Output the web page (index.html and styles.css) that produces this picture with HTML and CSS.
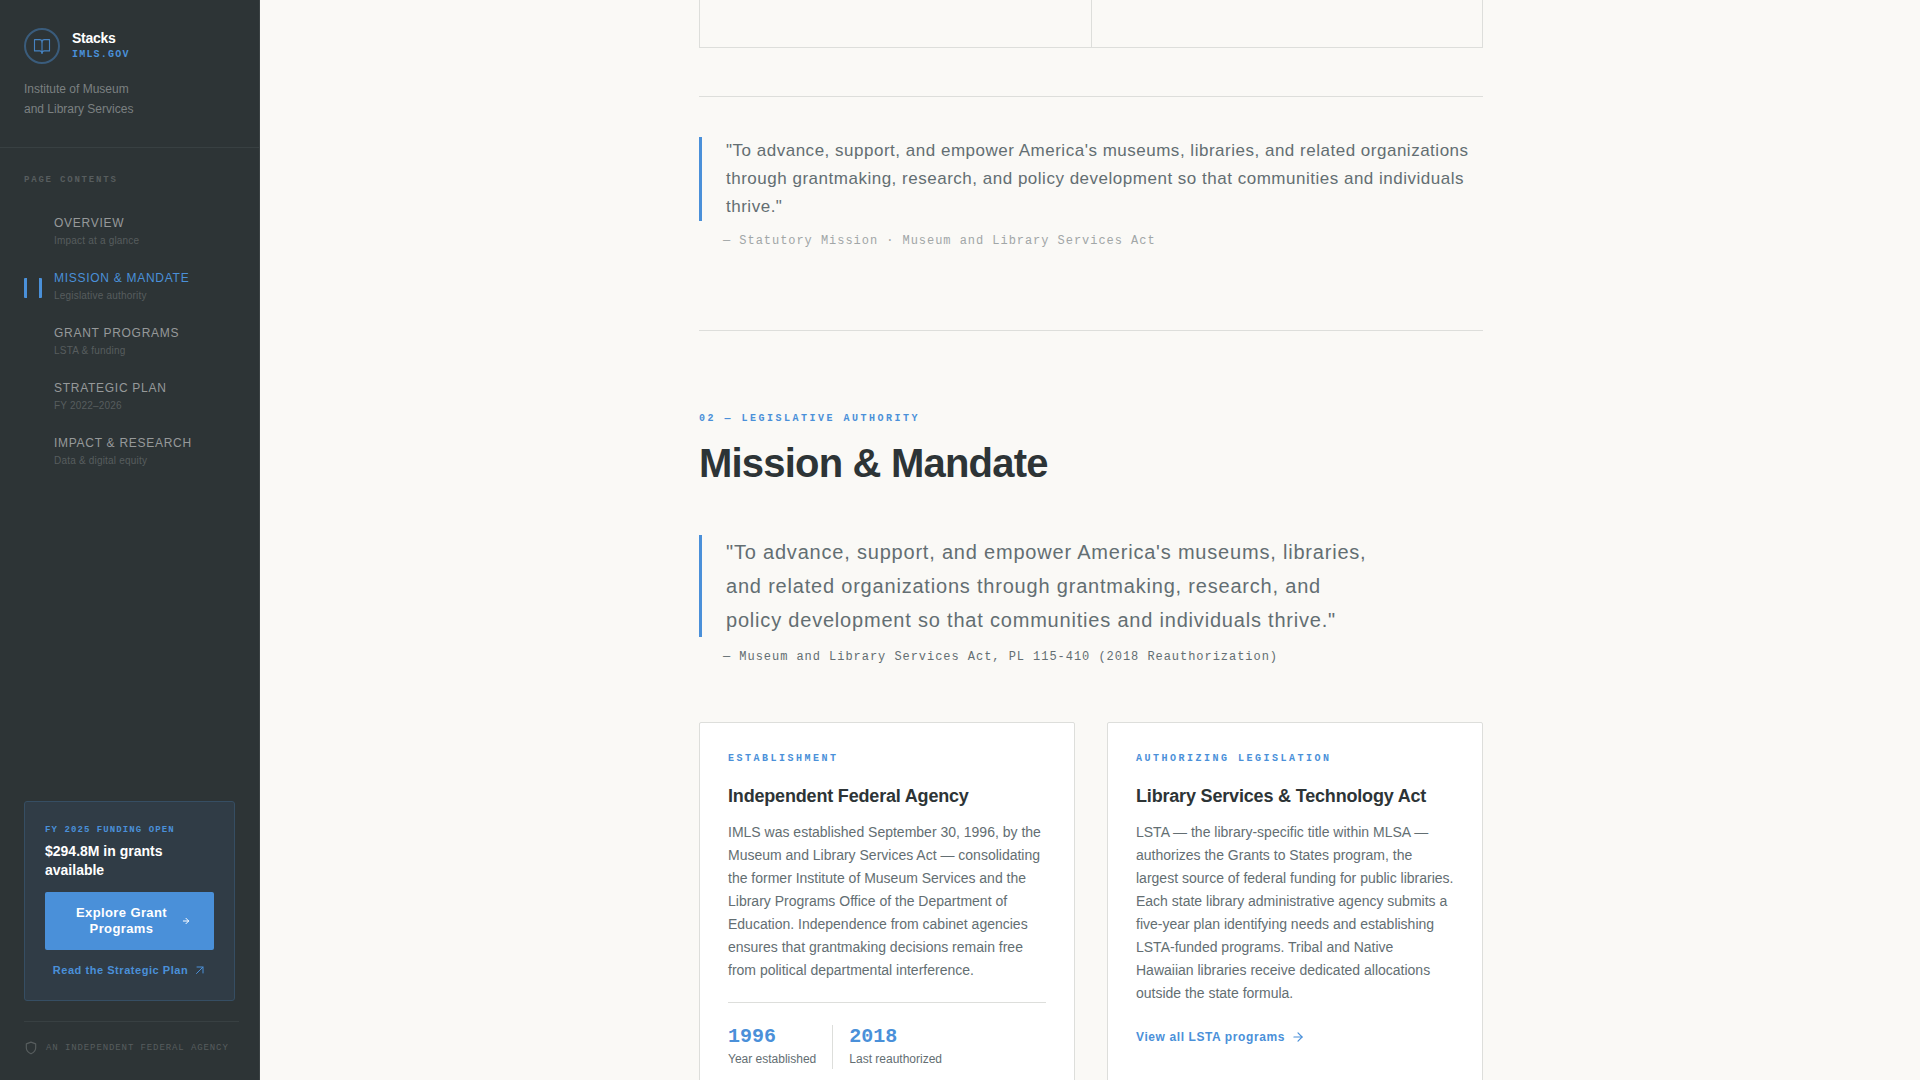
FILE: index.html
```html
<!DOCTYPE html>
<html lang="en">
<head>
  <meta charset="UTF-8" />
  <meta name="viewport" content="width=device-width, initial-scale=1.0" />
  <title>Stacks | Institute of Museum and Library Services</title>
  <link rel="stylesheet" href="styles.css">
</head>
<body>
  <div class="app">
    <!-- Sidebar -->
    <aside class="sidebar">
      <div class="brand">
        <div class="brand-row">
          <span class="brand-mark">
            <svg width="18" height="18" viewBox="0 0 24 24" fill="none" stroke="currentColor" stroke-width="1.5" stroke-linecap="round" stroke-linejoin="round"><path d="M12 6.5v15"/><path d="M2 3.5h7a3 3 0 0 1 3 3 3 3 0 0 1 3-3h7v15h-7a3 3 0 0 0-3 3 3 3 0 0 0-3-3H2z"/></svg>
          </span>
          <div>
            <div class="brand-name">Stacks</div>
            <div class="brand-domain">IMLS.GOV</div>
          </div>
        </div>
        <p class="brand-org">Institute of Museum<br>and Library Services</p>
      </div>

      <nav class="toc">
        <h2 class="toc-label">PAGE CONTENTS</h2>
        <a class="toc-item" href="#overview">
          <span class="toc-title">OVERVIEW</span>
          <span class="toc-sub">Impact at a glance</span>
        </a>
        <a class="toc-item active" href="#mission">
          <span class="toc-title">MISSION &amp; MANDATE</span>
          <span class="toc-sub">Legislative authority</span>
        </a>
        <a class="toc-item" href="#grants">
          <span class="toc-title">GRANT PROGRAMS</span>
          <span class="toc-sub">LSTA &amp; funding</span>
        </a>
        <a class="toc-item" href="#plan">
          <span class="toc-title">STRATEGIC PLAN</span>
          <span class="toc-sub">FY 2022–2026</span>
        </a>
        <a class="toc-item" href="#impact">
          <span class="toc-title">IMPACT &amp; RESEARCH</span>
          <span class="toc-sub">Data &amp; digital equity</span>
        </a>
      </nav>

      <div class="funding">
        <div class="funding-label">FY 2025 FUNDING OPEN</div>
        <div class="funding-title">$294.8M in grants available</div>
        <a class="btn" href="#grants">
          <span>Explore Grant Programs</span>
          <svg width="8" height="8" viewBox="0 0 24 24" fill="none" stroke="currentColor" stroke-width="3" stroke-linecap="round" stroke-linejoin="round"><path d="M4 12h16"/><path d="M12 4l8 8-8 8"/></svg>
        </a>
        <a class="funding-link" href="#plan">
          <span>Read the Strategic Plan</span>
          <svg width="12" height="12" viewBox="0 0 24 24" fill="none" stroke="currentColor" stroke-width="2" stroke-linecap="round" stroke-linejoin="round"><path d="M5 19L18 6"/><path d="M6 6h12v12"/></svg>
        </a>
      </div>

      <div class="agency">
        <svg width="14" height="14" viewBox="0 0 24 24" fill="none" stroke="currentColor" stroke-width="2" stroke-linecap="round" stroke-linejoin="round"><path d="M12 22s8-4 8-10V5l-8-3-8 3v7c0 6 8 10 8 10z"/></svg>
        <span>AN INDEPENDENT FEDERAL AGENCY</span>
      </div>
    </aside>

    <!-- Main content -->
    <main class="main">
      <div class="content">
        <section class="overview" id="overview">
          <div class="stat-grid">
            <div class="stat-cell"></div>
            <div class="stat-cell"></div>
          </div>
          <figure class="statement">
            <blockquote class="quote">"To advance, support, and empower America's museums, libraries, and related organizations through grantmaking, research, and policy development so that communities and individuals thrive."</blockquote>
            <figcaption class="cite light">— Statutory Mission · Museum and Library Services Act</figcaption>
          </figure>
        </section>

        <section class="mission" id="mission">
          <div class="label">02 — LEGISLATIVE AUTHORITY</div>
          <h1>Mission &amp; Mandate</h1>
          <figure class="mandate">
            <blockquote class="quote large">"To advance, support, and empower America's museums, libraries, and related organizations through grantmaking, research, and policy development so that communities and individuals thrive."</blockquote>
            <figcaption class="cite">— Museum and Library Services Act, PL 115-410 (2018 Reauthorization)</figcaption>
          </figure>

          <div class="cards">
            <article class="card">
              <div class="label">ESTABLISHMENT</div>
              <h3>Independent Federal Agency</h3>
              <p>IMLS was established September 30, 1996, by the Museum and Library Services Act — consolidating the former Institute of Museum Services and the Library Programs Office of the Department of Education. Independence from cabinet agencies ensures that grantmaking decisions remain free from political departmental interference.</p>
              <div class="years">
                <div class="year">
                  <div class="year-num">1996</div>
                  <div class="year-text">Year established</div>
                </div>
                <div class="year">
                  <div class="year-num">2018</div>
                  <div class="year-text">Last reauthorized</div>
                </div>
              </div>
            </article>
            <article class="card">
              <div class="label">AUTHORIZING LEGISLATION</div>
              <h3>Library Services &amp; Technology Act</h3>
              <p>LSTA — the library-specific title within MLSA — authorizes the Grants to States program, the largest source of federal funding for public libraries. Each state library administrative agency submits a five-year plan identifying needs and establishing LSTA-funded programs. Tribal and Native Hawaiian libraries receive dedicated allocations outside the state formula.</p>
              <a class="card-link" href="#grants">
                <span>View all LSTA programs</span>
                <svg width="14" height="14" viewBox="0 0 24 24" fill="none" stroke="currentColor" stroke-width="2" stroke-linecap="round" stroke-linejoin="round"><path d="M5 12h14"/><path d="M12 5l7 7-7 7"/></svg>
              </a>
            </article>
          </div>
        </section>
      </div>
    </main>
  </div>
</body>
</html>
```

FILE: styles.css
```css
/* RESET & BASE STYLES */
* {
  margin: 0;
  padding: 0;
  box-sizing: border-box;
}
body {
  font-family: "Liberation Sans", Arial, sans-serif;
  background: #faf9f6;
  color: #2d3436;
}
a {
  text-decoration: none;
}
svg {
  flex-shrink: 0;
}
.app {
  display: flex;
  height: 100vh;
}
/* SIDEBAR */
.sidebar {
  display: flex;
  flex-direction: column;
  width: 260px;
  flex-shrink: 0;
  background: #2d3436;
  border-right: 1px solid #3b4244;
  overflow: hidden;
}
.brand {
  padding: 28px 24px;
  border-bottom: 1px solid #384042;
}
.brand-row {
  display: flex;
  align-items: center;
  gap: 12px;
  margin-bottom: 15px;
}
.brand-mark {
  display: flex;
  align-items: center;
  justify-content: center;
  width: 36px;
  height: 36px;
  border: 2px solid #3a5c7c;
  border-radius: 50%;
  color: #4682c0;
}
.brand-name {
  font-size: 14px;
  font-weight: bold;
  line-height: 18px;
  letter-spacing: -0.02em;
  color: #fff;
}
.brand-domain {
  font-family: "Liberation Mono", monospace;
  font-size: 10px;
  font-weight: bold;
  line-height: 16px;
  letter-spacing: 0.12em;
  color: #4a90d9;
}
.brand-org {
  font-size: 12px;
  line-height: 20px;
  color: #7b8081;
}
/* PAGE CONTENTS */
.toc {
  flex: 1;
  padding: 24px;
}
.toc-label {
  margin-bottom: 17px;
  font-family: "Liberation Mono", monospace;
  font-size: 9px;
  line-height: 16px;
  letter-spacing: 0.2em;
  color: #575d5e;
}
.toc-item {
  position: relative;
  display: block;
  padding: 9px 0 10px 30px;
}
.toc-title,
.toc-sub {
  display: block;
  line-height: 18px;
}
.toc-title {
  font-size: 12px;
  letter-spacing: 0.06em;
  color: #96999a;
}
.toc-sub {
  font-size: 10px;
  letter-spacing: 0.02em;
  color: #575d5e;
}
.toc-item.active .toc-title {
  color: #4a90d9;
}
.toc-item.active::before {
  content: "";
  position: absolute;
  left: 0;
  top: 18px;
  width: 12px;
  height: 20px;
  border: solid #4a90d9;
  border-width: 0 3px;
  border-radius: 1px;
}
/* FUNDING BOX */
.funding {
  margin: 0 24px 20px;
  padding: 20px;
  background: #303c46;
  border: 1px solid #364e63;
  border-radius: 3px;
}
.funding-label {
  margin-bottom: 4px;
  font-family: "Liberation Mono", monospace;
  font-size: 9px;
  font-weight: bold;
  line-height: 16px;
  letter-spacing: 0.12em;
  white-space: nowrap;
  color: #4a90d9;
}
.funding-title {
  margin-bottom: 12px;
  font-size: 14px;
  font-weight: bold;
  line-height: 19px;
  color: #fff;
}
.btn {
  display: flex;
  align-items: center;
  justify-content: center;
  gap: 8px;
  padding: 13px 24px;
  background: #4a90d9;
  border-radius: 2px;
  font-size: 13px;
  font-weight: bold;
  line-height: 16px;
  letter-spacing: 0.03em;
  text-align: center;
  color: #fff;
}
.funding-link {
  display: flex;
  align-items: center;
  justify-content: center;
  gap: 6px;
  padding: 12px 0 2px;
  font-size: 11px;
  font-weight: bold;
  line-height: 16px;
  letter-spacing: 0.05em;
  white-space: nowrap;
  color: #4a90d9;
}
.agency {
  display: flex;
  align-items: center;
  gap: 8px;
  margin: 0 20px 0 24px;
  padding: 18px 0 24px;
  border-top: 1px solid #384042;
  font-family: "Liberation Mono", monospace;
  font-size: 9px;
  line-height: 16px;
  letter-spacing: 0.1em;
  white-space: nowrap;
  color: #575d5e;
}
/* MAIN */
.main {
  flex: 1;
  padding-left: 2px;
  overflow-y: auto;
  scrollbar-width: none;
}
.content {
  max-width: 784px;
  margin: 0 auto;
}
.stat-grid {
  display: grid;
  grid-template-columns: 1fr 1fr;
  height: 48px;
  border: 1px solid #dddedb;
  border-top: none;
}
.stat-cell + .stat-cell {
  border-left: 1px solid #dddedb;
}
.overview {
  padding-bottom: 80px;
  border-bottom: 1px solid #dddedb;
}
.statement {
  margin-top: 48px;
  padding-top: 40px;
  border-top: 1px solid #dddedb;
}
/* QUOTES */
.quote {
  padding-left: 24px;
  border-left: 3px solid #4a90d9;
  font-size: 17px;
  line-height: 28px;
  letter-spacing: 0.03em;
  color: #636e72;
}
.quote.large {
  max-width: 680px;
  font-size: 20px;
  line-height: 34px;
  letter-spacing: 0.04em;
}
.cite {
  margin: 12px 0 0 24px;
  font-family: "Liberation Mono", monospace;
  font-size: 12px;
  line-height: 17px;
  letter-spacing: 0.08em;
  color: #636e72;
}
.cite.light {
  color: #a1a6a7;
}
/* MISSION */
.mission {
  padding-top: 80px;
}
.label {
  font-family: "Liberation Mono", monospace;
  font-size: 10px;
  font-weight: bold;
  line-height: 16px;
  letter-spacing: 0.25em;
  color: #4a90d9;
}
h1 {
  margin-top: 12px;
  font-size: 40px;
  line-height: 48px;
  letter-spacing: -0.02em;
}
.mandate {
  margin: 48px 0 56px;
}
/* CARDS */
.cards {
  display: grid;
  grid-template-columns: 1fr 1fr;
  gap: 32px;
}
.card {
  padding: 28px;
  background: #fff;
  border: 1px solid #dddedb;
  border-radius: 2px;
}
.card h3 {
  margin: 16px 0 12px;
  font-size: 18px;
  line-height: 26px;
  letter-spacing: -0.01em;
}
.card p {
  font-size: 14px;
  line-height: 23px;
  color: #636e72;
}
.years {
  display: flex;
  gap: 16px;
  margin-top: 20px;
  padding-top: 22px;
  border-top: 1px solid #dddedb;
}
.year + .year {
  padding-left: 16px;
  border-left: 1px solid #dddedb;
}
.year-num {
  font-family: "Liberation Mono", monospace;
  font-size: 20px;
  font-weight: bold;
  line-height: 24px;
  color: #4a90d9;
}
.year-text {
  font-size: 12px;
  line-height: 20px;
  color: #636e72;
}
.card-link {
  display: flex;
  align-items: center;
  gap: 6px;
  margin-top: 20px;
  font-size: 12px;
  font-weight: bold;
  line-height: 24px;
  letter-spacing: 0.05em;
  color: #4a90d9;
}
```
